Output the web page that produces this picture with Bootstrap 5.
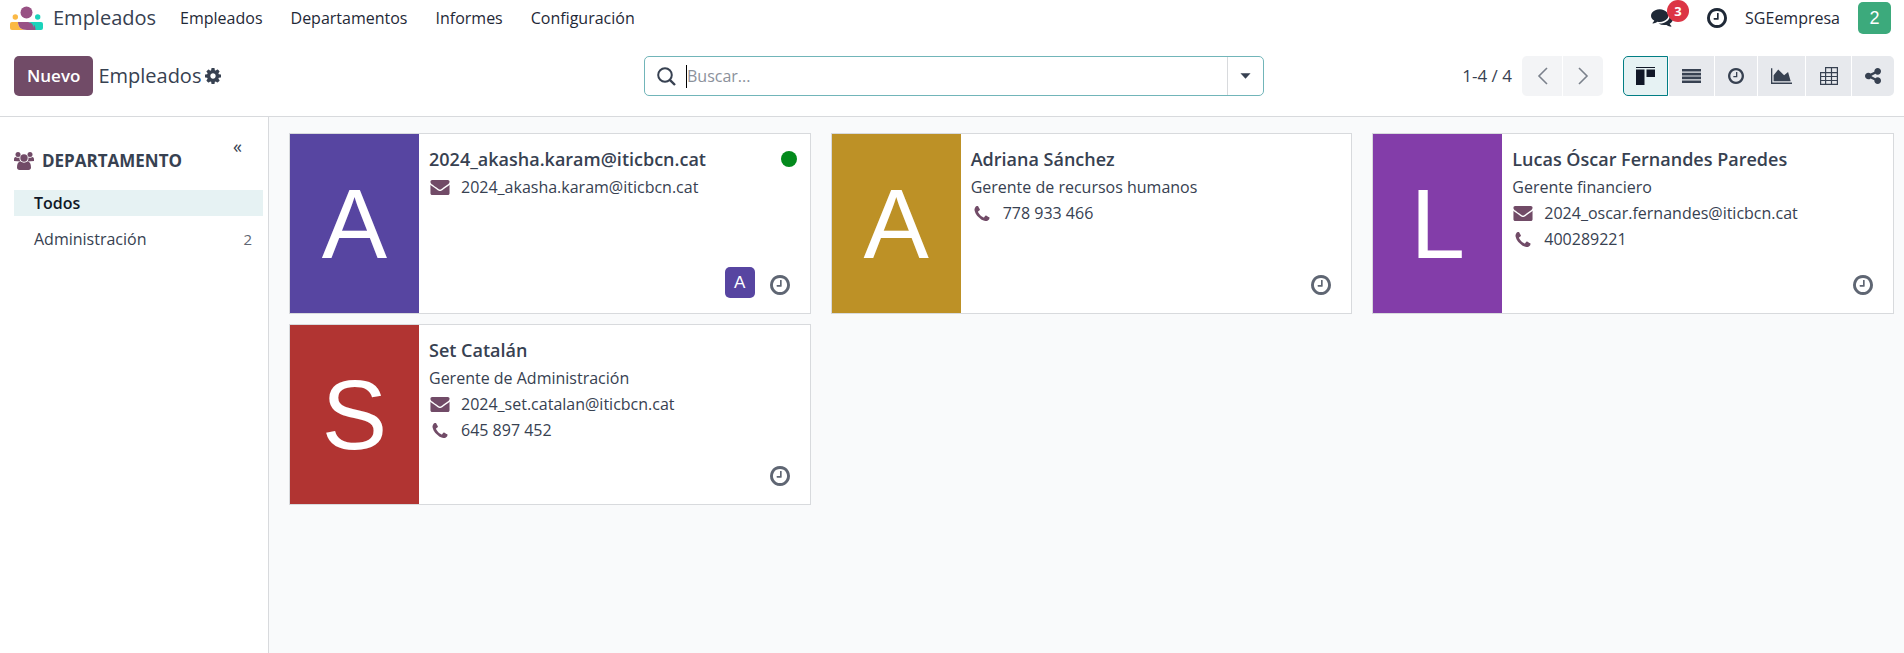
<!DOCTYPE html>
<html lang="es">
<head>
<meta charset="utf-8">
<meta name="viewport" content="width=device-width, initial-scale=1">
<title>Empleados</title>
<link href="https://cdn.jsdelivr.net/npm/bootstrap@5.3.0/dist/css/bootstrap.min.css" rel="stylesheet">
<style>
  :root { --ink: #374151; --dark: #1f2937; --brand: #714b67; --line: #d8dadd; --teal: #017e84; --tint: #e6f2f3; }
  body { font-family: "Open Sans", "Noto Sans", sans-serif; font-size: 16px; line-height: 26px; color: var(--ink); background: #fff; }
  a { color: inherit; text-decoration: none; }
  svg { display: block; flex: none; }
  svg:not([fill]) { fill: currentColor; }
  .topbar { min-height: 36px; padding: 0 13px 0 10px; color: var(--dark); }
  .app-name { font-size: 20px; color: var(--ink); margin: 0 24px 0 10px; }
  .topbar .nav { gap: 28px; }
  .topbar .nav-link { padding: 0; color: var(--dark); }
  .systray { gap: 18px; }
  .icon-btn { border: 0; background: none; padding: 0; color: inherit; position: relative; }
  .chat-count { position: absolute; left: 16px; top: -9px; width: 22px; height: 22px; line-height: 22px; border-radius: 50%; background: #dc3545; color: #fff; font-size: 13px; font-weight: 700; text-align: center; }
  .user-tile { width: 33px; height: 32px; border: 0; border-radius: 5px; background: #3caa7c; color: #fff; font: 18px/32px "Liberation Sans", sans-serif; padding: 0; }
  .control { padding: 20px 10px 20px 14px; border-bottom: 1px solid var(--line); }
  .control-side { flex: 1 1 0; }
  .btn-nuevo { --bs-btn-bg: var(--brand); --bs-btn-color: #fff; --bs-btn-hover-bg: #52374b; --bs-btn-hover-color: #fff; height: 40px; padding: 0 13px; border: 0; border-radius: 5px; font-size: 17px; font-weight: 600; }
  .crumb { font-size: 20px; margin: 0 4px 0 5px; }
  .search-box { flex: 0 1 620px; height: 40px; border: 1px solid #71b5b9; border-radius: 5px; }
  .search-box label { padding: 0 10px 0 12px; }
  .search-box input { border: 0; outline: 0; background: none; min-width: 0; color: var(--ink); padding: 0; }
  .search-box input::placeholder { color: #8b919b; opacity: 1; }
  .caret-bar { width: 1px; height: 23px; background: #000; }
  .search-toggle { width: 36px; border: 0; border-left: 1px solid var(--line); background: none; padding: 0; }
  .pager-text { font-size: 17px; margin-right: 10px; }
  .tool { height: 40px; border: 0; padding: 0; color: var(--ink); background: #e7e9ed; display: flex; align-items: center; justify-content: center; }
  .tools { gap: 1px; border-radius: 5px; }
  .tools .tool:first-child { border-radius: 5px 0 0 5px; }
  .tools .tool:last-child { border-radius: 0 5px 5px 0; }
  .pager .tool { background: #f3f4f6; color: #7b818c; width: 40px; }
  .tool-m { width: 45px; }
  .tool-s { width: 42px; }
  .tool-l { width: 47px; }
  .tools .tool.active { background: var(--tint); border: 1px solid var(--teal); color: #111827; }
  .side { width: 269px; flex: none; border-right: 1px solid var(--line); padding: 16px 5px 16px 14px; }
  .side-head { padding-top: 15px; }
  .side-title { font-size: 17px; font-weight: 700; line-height: 26px; margin: 0; }
  .side-fold { font-size: 18px; line-height: 26px; margin-right: 21px; }
  .side-nav { gap: 10px; }
  .side-row { font-size: 16px; line-height: 26px; padding: 0 11px 0 20px; }
  .side-row.active { background: var(--tint); color: #111827; font-weight: 600; }
  .count { font-size: 15px; color: #5f6673; }
  .board { background: #f9fafb; padding: 16px 10px 16px 20px; min-width: 0; }
  .board .row { --bs-gutter-x: 20px; --bs-gutter-y: 10px; }
  .person { min-height: 181px; border: 1px solid var(--line); background: #fff; }
  .portrait { width: 129px; flex: none; color: #fff; font: 98px/1 "Liberation Sans", sans-serif; }
  .bg-a { background: #5745a1; } .bg-b { background: #bd9126; } .bg-c { background: #833da9; } .bg-d { background: #b13432; }
  .info { padding: 11px 20px 15px 10px; min-width: 0; }
  .info h2 { font-size: 18px; font-weight: 600; line-height: 28px; margin: 0 0 1px; }
  .contact { gap: 10px; }
  .contact svg { width: 22px; color: var(--brand); }
  .online { width: 16px; height: 16px; border-radius: 50%; background: #038a1c; flex: none; margin: 6px -7px 0 0; }
  .card-foot { gap: 15px; min-height: 31px; color: #5f6673; }
  .card-foot .icon-btn { padding-top: 4px; }
  .mini { width: 30px; height: 31px; border-radius: 5px; color: #fff; font: 17px/31px "Liberation Sans", sans-serif; text-align: center; }
</style>
</head>
<body class="d-flex flex-column min-vh-100">
<svg width="0" height="0" class="position-absolute" aria-hidden="true">
  <symbol id="clock" viewBox="128 128 1536 1536"><path d="M1024 544v448q0 14-9 23t-23 9h-320q-14 0-23-9t-9-23v-64q0-14 9-23t23-9h224v-352q0-14 9-23t23-9h64q14 0 23 9t9 23zm416 352q0-148-73-273t-198-198-273-73-273 73-198 198-73 273 73 273 198 198 273 73 273-73 198-198 73-273zm224 0q0 209-103 385.5t-279.5 279.5-385.5 103-385.5-103-279.5-279.5-103-385.5 103-385.5 279.5-279.5 385.5-103 385.5 103 279.5 279.5 103 385.5z"/></symbol>
  <symbol id="mail" viewBox="0 256 1792 1408"><path d="M1792 710v794q0 66-47 113t-113 47h-1472q-66 0-113-47t-47-113v-794q44 49 101 87 362 246 497 345 57 42 92.5 65.5t94.5 48 110 24.5h2q51 0 110-24.5t94.5-48 92.5-65.5q170-123 498-345 57-39 100-87zm0-294q0 79-49 151t-122 123q-376 261-468 325-10 7-42.5 31t-54 38.5-52 32.5-57.5 27-50 9h-2q-23 0-50-9t-57.5-27-52-32.5-54-38.5-42.5-31q-91-64-262-182.5t-205-142.5q-62-42-117-115.5t-55-136.5q0-78 41.5-130t118.5-52h1472q65 0 112.5 47t47.5 113z"/></symbol>
  <symbol id="phone" viewBox="192 128 1408 1408"><path d="M1600 1240q0 27-10 70.5t-21 68.5q-21 50-122 106-94 51-186 51-27 0-53-3.5t-57.5-12.5-47-14.5-55.5-20.5-49-18q-98-35-175-83-127-79-264-216t-216-264q-48-77-83-175-3-9-18-49t-20.5-55.5-14.5-47-12.5-57.5-3.5-53q0-92 51-186 56-101 106-122 25-11 68.5-21t70.5-10q14 0 21 3 18 6 53 76 11 19 30 54t35 63.5 31 53.5q3 4 17.5 25t21.5 35.5 7 28.5q0 20-28.5 50t-62 55-62 53-28.5 46q0 9 5 22.5t8.5 20.5 14 24 11.5 19q76 137 174 235t235 174q2 1 19 11.5t24 14 20.5 8.5 22.5 5q18 0 46-28.5t53-62 55-62 50-28.5q14 0 28.5 7t35.5 21.5 25 17.5q25 15 53.5 31t63.5 35 54 30q70 35 76 53 3 7 3 21z"/></symbol>
</svg>

<header class="topbar d-flex align-items-center">
  <a href="#" class="d-flex align-items-center">
    <svg width="33" height="24" viewBox="0 0 33 24" aria-hidden="true">
      <circle cx="16.500" cy="6.500" r="6" fill="#985184"/>
      <circle cx="5.300" cy="11" r="2.700" fill="#fbb945"/><circle cx="27.700" cy="11" r="2.700" fill="#1ad3bb"/>
      <path d="M0 18a2 2 0 0 1 2-2h6c0 5 3 8 9 8H2a2 2 0 0 1-2-2z" fill="#fbb945"/>
      <path d="M33 18a2 2 0 0 0-2-2h-8l2 8h6a2 2 0 0 0 2-2z" fill="#1ad3bb"/>
      <path d="M8 16h10c5 0 7.500 3 7.500 8H17c-6 0-9-3-9-8z" fill="#985184"/>
      <path d="M17 16h7v6c-1-4-3-6-7-6z" fill="#1ad3bb"/>
    </svg>
    <span class="app-name">Empleados</span>
  </a>
  <nav class="nav me-auto">
    <a class="nav-link" href="#">Empleados</a>
    <a class="nav-link" href="#">Departamentos</a>
    <a class="nav-link" href="#">Informes</a>
    <a class="nav-link" href="#">Configuración</a>
  </nav>
  <div class="systray d-flex align-items-center">
    <button class="icon-btn me-3" type="button" aria-label="Mensajes">
      <svg width="22" height="18" viewBox="0 256 1792 1408" aria-hidden="true"><path d="M1408 768q0 139-94 257t-256.500 186.500-353.500 68.500q-86 0-176-16-124 88-278 128-36 9-86 16h-3q-11 0-20.500-8t-11.500-21q-1-3-1-6.500t.5-6.500 2-6l2.500-5 3.500-5.500 4-5 4.500-5 4-4.500q5-6 23-25t26-29.500 22.500-29 25-38.500 20.500-44q-124-72-195-177t-71-224q0-139 94-257t256.500-186.500 353.500-68.500 353.500 68.500 256.500 186.500 94 257zm384 256q0 120-71 224.500t-195 176.500q10 24 20.500 44t25 38.500 22.500 29 26 29.500 23 25q1 1 4 4.500t4.500 5 4 5 3.500 5.500l2.500 5 2 6 .5 6.500-1 6.500q-3 14-13 22t-22 7q-50-7-86-16-154-40-278-128-90 16-176 16-271 0-472-132 58 4 88 4 161 0 309-45t264-129q125-92 192-212t67-254q0-77-23-152 129 71 204 178t75 230z"/></svg>
      <span class="chat-count">3</span>
    </button>
    <button class="icon-btn" type="button" aria-label="Actividades"><svg width="20" height="20" aria-hidden="true"><use href="#clock"/></svg></button>
    <a href="#">SGEempresa</a>
    <button class="user-tile" type="button">2</button>
  </div>
</header>

<div class="control d-flex align-items-center">
  <div class="control-side d-flex align-items-center">
    <button class="btn btn-nuevo" type="button">Nuevo</button>
    <span class="crumb">Empleados</span>
    <button class="icon-btn" type="button" aria-label="Acciones">
      <svg width="16" height="16" viewBox="128 128 1536 1536" aria-hidden="true"><path d="M1152 896q0-106-75-181t-181-75-181 75-75 181 75 181 181 75 181-75 75-181zm512-109v222q0 12-8 23t-20 13l-185 28q-19 54-39 91 35 50 107 138 10 12 10 25t-9 23q-27 37-99 108t-94 71q-12 0-26-9l-138-108q-44 23-91 38-16 136-29 186-7 28-36 28h-222q-14 0-24.500-8.500t-11.500-21.500l-28-184q-49-16-90-37l-141 107q-10 9-25 9-14 0-25-11-126-114-165-168-7-10-7-23 0-12 8-23 15-21 51-66.500t54-70.500q-27-50-41-99l-183-27q-13-2-21-12.500t-8-23.500v-222q0-12 8-23t19-13l186-28q14-46 39-92-40-57-107-138-10-12-10-24 0-10 9-23 26-36 98.500-107.500t94.500-71.500q13 0 26 10l138 107q44-23 91-38 16-136 29-186 7-28 36-28h222q14 0 24.500 8.500t11.500 21.500l28 184q49 16 90 37l142-107q9-9 24-9 13 0 25 10 129 119 165 170 7 8 7 22 0 12-8 23-15 21-51 66.500t-54 70.500q26 50 41 98l183 28q13 2 21 12.500t8 23.500z"/></svg>
    </button>
  </div>
  <div class="search-box d-flex">
    <label for="q" class="d-flex align-items-center" aria-label="Buscar">
      <svg width="19" height="19" viewBox="0 0 19 19" fill="none" stroke="currentColor" stroke-width="2" aria-hidden="true"><circle cx="8" cy="8" r="6.800"/><path d="M12.800 12.800L18 18" stroke-width="2.400"/></svg>
    </label>
    <span class="caret-bar align-self-center"></span>
    <input id="q" type="text" class="flex-grow-1" placeholder="Buscar...">
    <button class="search-toggle d-flex align-items-center justify-content-center" type="button" aria-label="Filtros"><svg width="11" height="6" viewBox="0 0 12 6" fill="#374151" aria-hidden="true"><path d="M.5 0h11L6 6z"/></svg></button>
  </div>
  <div class="control-side d-flex align-items-center justify-content-end">
    <span class="pager-text">1-4 / 4</span>
    <div class="tools pager d-flex">
      <button class="tool" type="button" aria-label="Anterior"><svg width="11" height="18" viewBox="0 0 11 18" fill="none" stroke="currentColor" stroke-width="1.600" aria-hidden="true"><path d="M10 1L2 9l8 8"/></svg></button>
      <button class="tool" type="button" aria-label="Siguiente"><svg width="11" height="18" viewBox="0 0 11 18" fill="none" stroke="currentColor" stroke-width="1.600" aria-hidden="true"><path d="M1 1l8 8-8 8"/></svg></button>
    </div>
    <div class="tools d-flex ms-3 ps-1">
      <button class="tool tool-m active" type="button" aria-label="Kanban"><svg width="19" height="18" viewBox="0 0 19 18" aria-hidden="true"><path d="M0 0h19v1H0zM0 2.500h8.500V18H0zM10.500 2.500H19V10h-8.500z"/></svg></button>
      <button class="tool tool-m" type="button" aria-label="Lista"><svg width="19" height="14" viewBox="0 0 19 14" aria-hidden="true"><path d="M0 0h19v2.600H0zM0 3.800h19v2.600H0zM0 7.600h19v2.600H0zM0 11.400h19V14H0z"/></svg></button>
      <button class="tool tool-s" type="button" aria-label="Actividad"><svg width="16" height="16" aria-hidden="true"><use href="#clock"/></svg></button>
      <button class="tool tool-l" type="button" aria-label="Gráfico"><svg width="21" height="16" viewBox="0 128 2048 1536" aria-hidden="true"><path d="M2048 1536v128h-2048v-1536h128v1408h1920zm-384-1024l256 896h-1664v-576l448-576 576 576z"/></svg></button>
      <button class="tool tool-m" type="button" aria-label="Tabla dinámica"><svg width="18" height="18" viewBox="0 0 18 18" fill="none" stroke="currentColor" stroke-width="1.200" aria-hidden="true"><path d="M5.600 5.600V.6h11.800v16.800H.6V5.600zM5.600 5.600h11.800M.6 9.500h16.800M.6 13.500h16.800M5.600 5.600v11.800M11.500.6v16.800"/></svg></button>
      <button class="tool tool-s" type="button" aria-label="Organigrama"><svg width="16" height="16" viewBox="128 128 1536 1536" aria-hidden="true"><path d="M1344 1024q133 0 226.500 93.500t93.500 226.500-93.500 226.500-226.500 93.500-226.500-93.500-93.500-226.500q0-12 2-34l-360-180q-92 86-218 86-133 0-226.500-93.500t-93.500-226.500 93.500-226.500 226.500-93.500q126 0 218 86l360-180q-2-22-2-34 0-133 93.500-226.500t226.500-93.500 226.500 93.500 93.500 226.500-93.500 226.500-226.500 93.500q-126 0-218-86l-360 180q2 22 2 34t-2 34l360 180q92-86 218-86z"/></svg></button>
    </div>
  </div>
</div>

<div class="d-flex flex-grow-1">
  <aside class="side">
    <div class="d-flex justify-content-between mb-3">
      <div class="side-head d-flex align-items-center">
        <svg width="20" height="18" viewBox="0 0 20 18" fill="#714b67" class="me-2" aria-hidden="true"><circle cx="4" cy="2.600" r="2.500"/><circle cx="16" cy="2.600" r="2.500"/><circle cx="10" cy="6" r="3.700"/><path d="M0 9V7.500C0 6 .6 5 1.600 5c.8.800 3 1 4 .4-.3 1.600.2 3 1 4zM20 9V7.500C20 6 19.400 5 18.400 5c-.8.800-3 1-4 .4.3 1.600-.2 3-1 4zM6.600 9.500c2 1.500 4.800 1.500 6.800 0 2.300 0 3.600 2 3.600 6 0 1.600-1 2.500-2.500 2.500h-9C4 18 3 17.100 3 15.500c0-4 1.300-6 3.600-6z"/></svg>
        <h1 class="side-title">DEPARTAMENTO</h1>
      </div>
      <button class="icon-btn side-fold align-self-start" type="button" aria-label="Contraer">«</button>
    </div>
    <nav class="side-nav d-flex flex-column">
      <a href="#" class="side-row active">Todos</a>
      <a href="#" class="side-row d-flex justify-content-between">Administración<span class="count">2</span></a>
    </nav>
  </aside>

  <main class="board flex-grow-1">
    <div class="row row-cols-1 row-cols-lg-2 row-cols-xl-3">
      <div class="col">
        <article class="person d-flex">
          <div class="portrait bg-a d-flex align-items-center justify-content-center">A</div>
          <div class="info d-flex flex-column flex-grow-1">
            <div class="d-flex justify-content-between"><h2>2024_akasha.karam@iticbcn.cat</h2><span class="online"></span></div>
            <div class="contact d-flex align-items-center"><svg height="15" aria-hidden="true"><use href="#mail"/></svg>2024_akasha.karam@iticbcn.cat</div>
            <div class="card-foot d-flex align-items-center justify-content-end mt-auto"><span class="mini bg-a">A</span><button class="icon-btn" type="button" aria-label="Actividades"><svg width="20" height="20" aria-hidden="true"><use href="#clock"/></svg></button></div>
          </div>
        </article>
      </div>
      <div class="col">
        <article class="person d-flex">
          <div class="portrait bg-b d-flex align-items-center justify-content-center">A</div>
          <div class="info d-flex flex-column flex-grow-1">
            <h2>Adriana Sánchez</h2>
            <div>Gerente de recursos humanos</div>
            <div class="contact d-flex align-items-center"><svg height="15" aria-hidden="true"><use href="#phone"/></svg>778 933 466</div>
            <div class="card-foot d-flex align-items-center justify-content-end mt-auto"><button class="icon-btn" type="button" aria-label="Actividades"><svg width="20" height="20" aria-hidden="true"><use href="#clock"/></svg></button></div>
          </div>
        </article>
      </div>
      <div class="col">
        <article class="person d-flex">
          <div class="portrait bg-c d-flex align-items-center justify-content-center">L</div>
          <div class="info d-flex flex-column flex-grow-1">
            <h2>Lucas Óscar Fernandes Paredes</h2>
            <div>Gerente financiero</div>
            <div class="contact d-flex align-items-center"><svg height="15" aria-hidden="true"><use href="#mail"/></svg>2024_oscar.fernandes@iticbcn.cat</div>
            <div class="contact d-flex align-items-center"><svg height="15" aria-hidden="true"><use href="#phone"/></svg>400289221</div>
            <div class="card-foot d-flex align-items-center justify-content-end mt-auto"><button class="icon-btn" type="button" aria-label="Actividades"><svg width="20" height="20" aria-hidden="true"><use href="#clock"/></svg></button></div>
          </div>
        </article>
      </div>
      <div class="col">
        <article class="person d-flex">
          <div class="portrait bg-d d-flex align-items-center justify-content-center">S</div>
          <div class="info d-flex flex-column flex-grow-1">
            <h2>Set Catalán</h2>
            <div>Gerente de Administración</div>
            <div class="contact d-flex align-items-center"><svg height="15" aria-hidden="true"><use href="#mail"/></svg>2024_set.catalan@iticbcn.cat</div>
            <div class="contact d-flex align-items-center"><svg height="15" aria-hidden="true"><use href="#phone"/></svg>645 897 452</div>
            <div class="card-foot d-flex align-items-center justify-content-end mt-auto"><button class="icon-btn" type="button" aria-label="Actividades"><svg width="20" height="20" aria-hidden="true"><use href="#clock"/></svg></button></div>
          </div>
        </article>
      </div>
    </div>
  </main>
</div>
<script src="https://cdn.jsdelivr.net/npm/bootstrap@5.3.0/dist/js/bootstrap.bundle.min.js"></script>
</body>
</html>
